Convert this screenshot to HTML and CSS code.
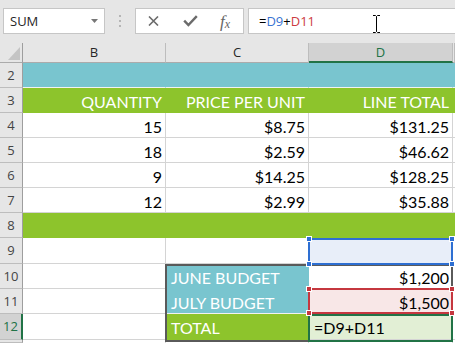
FILE: index.html
```html
<!DOCTYPE html>
<html lang="en">
<head>
    <meta charset="UTF-8">
    <meta name="viewport" content="width=device-width, initial-scale=1.0">
    <title>Budget Sheet</title>
    <link rel="stylesheet" href="styles.css">
</head>
<body>

<div class="toolbar">
    <div class="namebox">
        <span>SUM</span>
        <svg class="arrow" width="7" height="4" viewBox="0 0 7 4"><path d="M0 0h7L3.5 4z" fill="#777"/></svg>
    </div>
    <div class="grip"><i></i><i></i><i></i></div>
    <div class="buttons">
        <svg class="btn-x" width="11" height="10" viewBox="0 0 11 10"><path d="M1 .5l9 9M10 .5l-9 9" stroke="#6b6b6b" stroke-width="1.6" fill="none"/></svg>
        <svg class="btn-ok" width="15" height="12" viewBox="0 0 15 12"><path d="M1.2 5.6l4.2 4.4L13.8 1.2" stroke="#6b6b6b" stroke-width="2.4" fill="none"/></svg>
        <span class="fx"><i>f</i><sub>x</sub></span>
    </div>
    <div class="formula">
        <span>=</span><span class="ref-blue">D9</span><span>+</span><span class="ref-red">D11</span>
        <svg class="ibeam" width="9" height="18" viewBox="0 0 9 18"><path d="M1 .5h2.5l1 1 1-1H8M4.5 1.5v15M1 17.5h2.5l1-1 1 1H8" stroke="#000" stroke-width="1" fill="none"/></svg>
    </div>
</div>

<div class="sheet">
    <div class="cells">
        <!-- column headers -->
        <div class="corner"><div class="tri"></div></div>
        <div class="colhead">B</div>
        <div class="colhead">C</div>
        <div class="colhead active">D</div>
        <div class="colhead"></div>

        <div class="rh">2</div>
        <div class="c teal sep"></div>
        <div class="c teal sep"></div>
        <div class="c teal sep"></div>
        <div class="c teal sep"></div>

        <div class="rh">3</div>
        <div class="c green light">QUANTITY</div>
        <div class="c green light">PRICE PER UNIT</div>
        <div class="c green light">LINE TOTAL</div>
        <div class="c green"></div>

        <div class="rh">4</div>
        <div class="c">15</div>
        <div class="c">$8.75</div>
        <div class="c">$131.25</div>
        <div class="c"></div>

        <div class="rh">5</div>
        <div class="c">18</div>
        <div class="c">$2.59</div>
        <div class="c">$46.62</div>
        <div class="c"></div>

        <div class="rh">6</div>
        <div class="c">9</div>
        <div class="c">$14.25</div>
        <div class="c">$128.25</div>
        <div class="c"></div>

        <div class="rh">7</div>
        <div class="c">12</div>
        <div class="c">$2.99</div>
        <div class="c">$35.88</div>
        <div class="c"></div>

        <div class="rh">8</div>
        <div class="c green"></div>
        <div class="c green"></div>
        <div class="c green"></div>
        <div class="c green"></div>

        <div class="rh">9</div>
        <div class="c"></div>
        <div class="c"></div>
        <div class="c fill-blue"></div>
        <div class="c"></div>

        <div class="rh">10</div>
        <div class="c"></div>
        <div class="c teal light left">JUNE BUDGET</div>
        <div class="c">$1,200</div>
        <div class="c"></div>

        <div class="rh">11</div>
        <div class="c"></div>
        <div class="c teal sep light left">JULY BUDGET</div>
        <div class="c fill-red">$1,500</div>
        <div class="c"></div>

        <div class="rh active">12</div>
        <div class="c"></div>
        <div class="c green light left">TOTAL</div>
        <div class="c fill-green left">=D9+D11</div>
        <div class="c"></div>

        <!-- top edge of row 13 -->
        <div class="rh"></div>
        <div class="c"></div>
        <div class="c"></div>
        <div class="c"></div>
        <div class="c"></div>
    </div>

    <!-- range outline and reference boxes drawn over the cells -->
    <div class="marks">
        <div class="range"></div>
        <div class="box blue">
            <i class="handle tl"></i><i class="handle tr"></i><i class="handle bl"></i><i class="handle br"></i>
        </div>
        <div class="box red">
            <i class="handle tl"></i><i class="handle tr"></i><i class="handle bl"></i><i class="handle br"></i>
        </div>
        <div class="box green"></div>
    </div>
</div>

</body>
</html>
```

FILE: styles.css
```css
body {
    margin: 0;
    width: 455px;
    height: 343px;
    overflow: hidden;
    background-color: #e6e6e6;
    font-family: 'Open Sans', sans-serif;
}

/* formula bar */

.toolbar {
    display: flex;
    height: 43px;
    box-sizing: border-box;
    padding-top: 8px;
}

.namebox {
    margin-left: 3px;
    width: 102px;
    height: 26px;
    box-sizing: border-box;
    border: 1px solid #c6c6c6;
    background-color: #fff;
    display: flex;
    align-items: center;
    justify-content: space-between;
    padding: 0 6px 0 6px;
    font-size: 13px;
    color: #262626;
}

.grip {
    width: 30px;
    height: 26px;
    display: flex;
    flex-direction: column;
    align-items: center;
    justify-content: center;
    gap: 3px;
}

.grip i {
    width: 2px;
    height: 2px;
    background-color: #b5b5b5;
}

.buttons {
    width: 109px;
    height: 26px;
    box-sizing: border-box;
    border: 1px solid #c6c6c6;
    background-color: #fff;
    display: flex;
    align-items: center;
    padding-left: 12px;
}

.btn-ok {
    margin-left: 24px;
}

.fx {
    margin-left: 22px;
    font-family: 'Liberation Serif', serif;
    font-size: 17px;
    color: #666;
    line-height: 1;
}

.fx sub {
    font-size: 12px;
    font-style: italic;
    vertical-align: -1px;
}

.formula {
    position: relative;
    margin-left: 4px;
    flex: 1;
    height: 26px;
    box-sizing: border-box;
    border: 1px solid #c6c6c6;
    border-right: none;
    background-color: #fff;
    padding-left: 10px;
    display: flex;
    align-items: center;
    font-size: 13px;
    color: #000;
}

.ref-blue {
    color: #3a73d3;
}

.ref-red {
    color: #cc3a3f;
}

.ibeam {
    position: absolute;
    left: 123px;
    top: 6px;
}

/* sheet */

.sheet {
    display: grid;
}

.cells,
.marks {
    grid-area: 1 / 1;
    display: grid;
    grid-template-columns: 23px 143px 143px 144px 2px;
    grid-template-rows: 20px 25px 25px 25px 25px 25px 25px 25px 26px 25px 25px 26px 3px;
}

.marks {
    z-index: 1;
    pointer-events: none;
}

.corner {
    box-sizing: border-box;
    border-right: 1px solid #9e9e9e;
    border-bottom: 1px solid #ababab;
    display: flex;
    align-items: flex-end;
    justify-content: flex-end;
    padding: 0 2px 2px 0;
}

.tri {
    width: 12px;
    height: 13px;
    background-color: #c4c4c4;
    clip-path: polygon(100% 0, 100% 100%, 0 100%);
}

.colhead {
    box-sizing: border-box;
    border-right: 1px solid #bdbdbd;
    border-bottom: 1px solid #ababab;
    text-align: center;
    font-size: 13px;
    line-height: 19px;
    color: #262626;
}

.colhead.active {
    background-color: #d2d2d2;
    border-bottom: 2px solid #217346;
    color: #217346;
}

.rh {
    box-sizing: border-box;
    border-right: 1px solid #9e9e9e;
    border-bottom: 1px solid #bdbdbd;
    text-align: center;
    font-size: 13px;
    line-height: 24px;
    color: #444;
}

.rh.active {
    background-color: #d2d2d2;
    border-right: 2px solid #217346;
    color: #217346;
}

.c {
    box-sizing: border-box;
    border-right: 1px solid #d4d4d4;
    border-bottom: 1px solid #d4d4d4;
    background-color: #fff;
    padding: 3px 3px 0 4px;
    font-family: 'Lato', sans-serif;
    font-size: 16px;
    line-height: 22px;
    text-align: right;
    color: #000;
    white-space: nowrap;
    overflow: hidden;
}

.c.left {
    text-align: left;
    padding-left: 5px;
}

.c.light {
    color: #fff;
}

.c.teal {
    background-color: #79c5cf;
    border-color: #79c5cf;
}

.c.green {
    background-color: #8dc42c;
    border-color: #8dc42c;
}

.c.sep {
    border-bottom-color: #f2f2f2;
}

.c.fill-blue {
    background-color: #e8eef9;
}

.c.fill-red {
    background-color: #f8e7e7;
}

.c.fill-green {
    background-color: #e2efd5;
}

/* outlines */

.range {
    grid-column: 3 / 5;
    grid-row: 10 / 13;
    border: 2px solid #5a5a5a;
    margin: 0 0 -2px -1px;
}

.box {
    position: relative;
    grid-column: 4;
    border: 2px solid;
    margin-left: -1px;
}

.box.blue {
    grid-row: 9;
    border-color: #2e6fd2;
    margin-bottom: -1px;
}

.box.red {
    grid-row: 11;
    border-color: #c5373f;
    margin-top: -1px;
}

.box.green {
    grid-row: 12;
    border-color: #217346;
    margin-bottom: -2px;
}

.handle {
    position: absolute;
    z-index: 2;
    width: 4px;
    height: 4px;
    border: 1px solid #fff;
}

.blue .handle {
    background-color: #2e6fd2;
}

.red .handle {
    background-color: #c5373f;
}

.tl { left: -4px; top: -4px; }
.tr { right: -4px; top: -4px; }
.bl { left: -4px; bottom: -4px; }
.br { right: -4px; bottom: -4px; }
```
